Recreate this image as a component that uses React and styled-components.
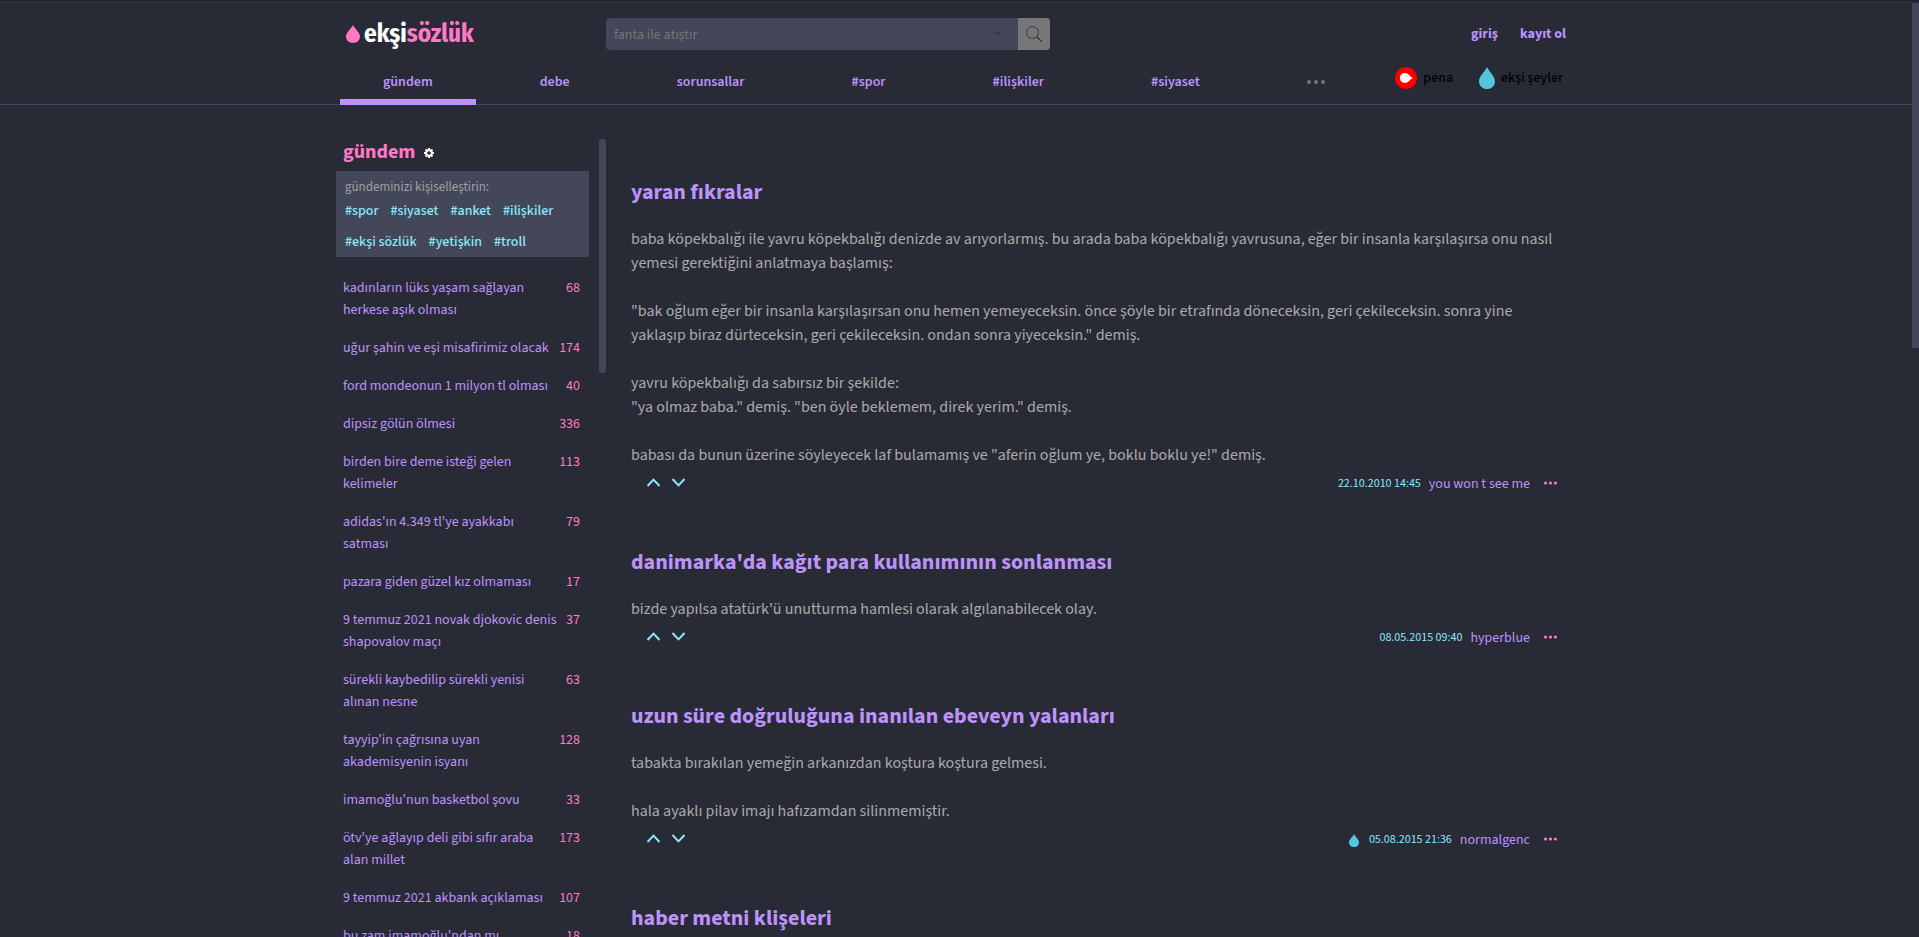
import React from "react"
import styled, { createGlobalStyle } from "styled-components"

const GlobalStyle = createGlobalStyle`
  * { box-sizing: border-box; }
  body {
    margin: 0;
    height: 100vh;
    overflow: hidden;
    background: #282a36;
    color: #aaa;
    font-family: "Source Sans Pro", "Source Sans 3", "Noto Sans", sans-serif;
    font-size: 14px;
    line-height: 22px;
  }
  a { color: #bd93f9; text-decoration: none; }
  button { border: 0; padding: 0; background: none; font: inherit; cursor: pointer; }
  svg { display: block; }
`

const Page = styled.div`
  height: 100vh;
  overflow: hidden;
  border-top: 1px solid #21222c;
  padding-right: 7px;
`

const PageScroll = styled.div`
  position: fixed;
  top: 3px;
  right: 0;
  width: 7px;
  height: 345px;
  background: #44475a;
`

const Header = styled.header`
  border-top: 1px solid #343642;
  border-bottom: 1px solid #44475a;
  margin-top: 1px;
`

const Container = styled.div`
  max-width: 1232px;
  margin: 0 auto;
`

const TopBar = styled.div`
  display: flex;
  align-items: center;
  padding: 15px 6px 0 6px;
  height: 47px;
`

const Logo = styled.a`
  display: flex;
  align-items: center;
  gap: 4px;
  width: 260px;
  color: #fff;
  font-size: 25px;
  font-weight: 700;
  line-height: 32px;
  font-family: "Fira Sans Condensed", "Open Sans Condensed", "Source Sans Pro", sans-serif;
  span span { color: #ff79c6; }
`

const Search = styled.form`
  display: flex;
  width: 444px;
  height: 32px;
  border-radius: 4px;
  overflow: hidden;
  background: #44475a;
  align-items: center;
  input {
    flex: 1;
    height: 32px;
    border: 0;
    outline: 0;
    padding: 1px 8px 0;
    background: none;
    color: #f8f8f2;
    font: inherit;
  }
  input::placeholder { color: #757575; opacity: 1; }
`

const CaretButton = styled.button`
  display: flex;
  padding: 12px 16px;
`

const SearchButton = styled.button`
  display: flex;
  align-items: center;
  justify-content: center;
  width: 32px;
  height: 32px;
  background: #777;
`

const Account = styled.nav`
  display: flex;
  gap: 22px;
  margin-left: auto;
  font-weight: 700;
`

const NavBar = styled.nav`
  display: flex;
  justify-content: space-between;
  height: 54px;
  padding: 0 9px 0 0;
`

const Tabs = styled.div`
  display: flex;
  gap: 21px;
`

const Tab = styled.a`
  padding: 21px 43px 0;
  font-weight: 600;
  border-bottom: 6px solid ${p => (p.$active ? "#bd93f9" : "transparent")};
  margin-bottom: -1px;
`

const MoreTab = styled.button`
  padding: 9px 43px 0;
`

const Sister = styled.div`
  display: flex;
  align-items: flex-start;
  gap: 26px;
  padding-top: 17px;
`

const SisterLink = styled.a`
  display: flex;
  align-items: center;
  gap: 6px;
  color: #000;
  font-weight: 500;
`

const Columns = styled.div`
  display: flex;
  align-items: flex-start;
  padding-top: 34px;
`

const Sidebar = styled.aside`
  flex: 0 0 249px;
  width: 249px;
  margin-right: 14px;
  margin-left: -4px;
`

const SideHead = styled.div`
  display: flex;
  align-items: flex-start;
  gap: 9px;
  padding-left: 7px;
  height: 32px;
  h2 {
    margin: 0;
    color: #ff79c6;
    font-size: 20px;
    line-height: 26px;
    font-weight: 700;
  }
  button { padding-top: 9px; }
`

const TagBox = styled.div`
  width: 253px;
  background: #44475a;
  padding: 5px 9px 0;
  height: 86px;
  small { display: block; font-size: 13px; line-height: 22px; color: #a0a0a0; }
`

const Tags = styled.div`
  display: flex;
  flex-wrap: wrap;
  column-gap: 12px;
  a { color: #8be9fd; font-weight: 500; line-height: 31px; }
  margin-top: -2px;
`

const Topics = styled.ul`
  list-style: none;
  margin: 12px 0 0;
  padding: 0;
`

const Topic = styled.li`
  a {
    display: flex;
    justify-content: space-between;
    padding: 8px 5px 8px 7px;
    white-space: pre-line;
  }
  small { font-size: 14px; color: #ff79c6; }
`

const SideScroll = styled.div`
  flex: 0 0 7px;
  height: 234px;
  border-radius: 3px;
  background: #44475a;
`

const Main = styled.main`
  flex: 1;
  padding: 41px 14px 0 25px;
`

const Entry = styled.article`
  margin-bottom: 55px;
  h1 {
    margin: 0 0 23px;
    font-size: 22px;
    line-height: 24px;
    font-weight: 700;
  }
  p {
    margin: 0;
    font-size: 16px;
    line-height: 24px;
    white-space: pre-line;
  }
`

const EntryFooter = styled.footer`
  display: flex;
  align-items: center;
  justify-content: space-between;
  padding: 6px 1px 0 16px;
`

const Votes = styled.div`
  display: flex;
  gap: 12px;
  padding-bottom: 3px;
`

const Meta = styled.div`
  display: flex;
  align-items: center;
  time { color: #8be9fd; font-size: 12px; margin: 0 8px 0 10px; }
  button { margin-left: 14px; padding-bottom: 2px; }
`

const Drop = ({ w, h, color }) => (
  <svg width={w} height={h} viewBox="0 0 14 18" preserveAspectRatio="none" aria-hidden="true">
    <path d="M7 0C5.6 3.2 0 7.6 0 11.6C0 15.4 3.1 18 7 18S14 15.4 14 11.6C14 7.6 8.4 3.2 7 0Z" fill={color} />
  </svg>
)

const Dots = ({ w, h, r, color }) => (
  <svg width={w} height={h} viewBox={`0 0 ${w} ${h}`} aria-hidden="true">
    <circle cx={r} cy={h / 2} r={r} fill={color} />
    <circle cx={w / 2} cy={h / 2} r={r} fill={color} />
    <circle cx={w - r} cy={h / 2} r={r} fill={color} />
  </svg>
)

const Chevron = ({ up }) => (
  <svg width="13" height="9" viewBox="0 0 13 9" fill="none" stroke="#8be9fd" strokeWidth="2" aria-hidden="true">
    <path d={up ? "M0.5 8L6.5 1.6L12.5 8" : "M0.5 1L6.5 7.4L12.5 1"} />
  </svg>
)

const tabs = ["gündem", "debe", "sorunsallar", "#spor", "#ilişkiler", "#siyaset"]

const tags = ["#spor", "#siyaset", "#anket", "#ilişkiler", "#ekşi sözlük", "#yetişkin", "#troll"]

const topics = [
  ["kadınların lüks yaşam sağlayan\nherkese aşık olması", 68],
  ["uğur şahin ve eşi misafirimiz olacak", 174],
  ["ford mondeonun 1 milyon tl olması", 40],
  ["dipsiz gölün ölmesi", 336],
  ["birden bire deme isteği gelen\nkelimeler", 113],
  ["adidas'ın 4.349 tl'ye ayakkabı\nsatması", 79],
  ["pazara giden güzel kız olmaması", 17],
  ["9 temmuz 2021 novak djokovic denis\nshapovalov maçı", 37],
  ["sürekli kaybedilip sürekli yenisi\nalınan nesne", 63],
  ["tayyip'in çağrısına uyan\nakademisyenin isyanı", 128],
  ["imamoğlu'nun basketbol şovu", 33],
  ["ötv'ye ağlayıp deli gibi sıfır araba\nalan millet", 173],
  ["9 temmuz 2021 akbank açıklaması", 107],
  ["bu zam imamoğlu'ndan mı", 18],
]

const entries = [
  {
    title: "yaran fıkralar",
    text: `baba köpekbalığı ile yavru köpekbalığı denizde av arıyorlarmış. bu arada baba köpekbalığı yavrusuna, eğer bir insanla karşılaşırsa onu nasıl yemesi gerektiğini anlatmaya başlamış:

"bak oğlum eğer bir insanla karşılaşırsan onu hemen yemeyeceksin. önce şöyle bir etrafında döneceksin, geri çekileceksin. sonra yine yaklaşıp biraz dürteceksin, geri çekileceksin. ondan sonra yiyeceksin." demiş.

yavru köpekbalığı da sabırsız bir şekilde:
"ya olmaz baba." demiş. "ben öyle beklemem, direk yerim." demiş.

babası da bunun üzerine söyleyecek laf bulamamış ve "aferin oğlum ye, boklu boklu ye!" demiş.`,
    date: "22.10.2010 14:45",
    author: "you won t see me",
  },
  {
    title: "danimarka'da kağıt para kullanımının sonlanması",
    text: "bizde yapılsa atatürk'ü unutturma hamlesi olarak algılanabilecek olay.",
    date: "08.05.2015 09:40",
    author: "hyperblue",
  },
  {
    title: "uzun süre doğruluğuna inanılan ebeveyn yalanları",
    text: `tabakta bırakılan yemeğin arkanızdan koştura koştura gelmesi.

hala ayaklı pilav imajı hafızamdan silinmemiştir.`,
    date: "05.08.2015 21:36",
    author: "normalgenc",
    drop: true,
  },
  { title: "haber metni klişeleri" },
]

const App = () => (
  <Page>
    <GlobalStyle />
    <Header>
      <Container>
        <TopBar>
          <Logo href="#">
            <Drop w={14} h={18} color="#ff79c6" />
            <span>ekşi<span>sözlük</span></span>
          </Logo>
          <Search onSubmit={e => e.preventDefault()}>
            <input type="text" aria-label="ara" placeholder="fanta ile atıştır" />
            <CaretButton type="button" aria-label="gelişmiş arama">
              <svg width="8" height="4" viewBox="0 0 8 4"><path d="M0 0H8L4 4Z" fill="#3a3a40" /></svg>
            </CaretButton>
            <SearchButton type="submit" aria-label="ara">
              <svg width="18" height="18" viewBox="0 0 18 18" fill="none" stroke="#33343f">
                <circle cx="7.5" cy="7.5" r="6" />
                <path d="M11.8 11.8L16.8 16.8" strokeWidth="1.3" />
              </svg>
            </SearchButton>
          </Search>
          <Account>
            <a href="#giris">giriş</a>
            <a href="#kayit">kayıt ol</a>
          </Account>
        </TopBar>
        <NavBar>
          <Tabs>
            {tabs.map((t, i) => <Tab key={t} href="#" $active={i === 0}>{t}</Tab>)}
            <MoreTab aria-label="diğer"><Dots w={18} h={4} r={2} color="#777" /></MoreTab>
          </Tabs>
          <Sister>
            <SisterLink href="#pena">
              <svg width="22" height="22" viewBox="0 0 22 22" aria-hidden="true">
                <circle cx="11" cy="11" r="11" fill="#f00" />
                <path d="M18 11C15.2 12.2 13.2 16 9.8 16A5 5 0 0 1 9.8 6C13.2 6 15.2 9.8 18 11Z" fill="#fff" />
              </svg>
              pena
            </SisterLink>
            <SisterLink href="#seyler">
              <Drop w={16} h={22} color="#53c5df" />
              ekşi şeyler
            </SisterLink>
          </Sister>
        </NavBar>
      </Container>
    </Header>

    <Container>
      <Columns>
        <Sidebar>
          <SideHead>
            <h2>gündem</h2>
            <button aria-label="ayarlar">
              <svg width="10" height="10" viewBox="0 0 10 10" aria-hidden="true">
                <circle cx="5" cy="5" r="2.8" fill="none" stroke="#f8f8f2" strokeWidth="2" />
                <path d="M5 0V2M5 8V10M0 5H2M8 5H10M1.5 1.5L2.8 2.8M7.2 7.2L8.5 8.5M1.5 8.5L2.8 7.2M7.2 2.8L8.5 1.5" stroke="#f8f8f2" strokeWidth="2" />
              </svg>
            </button>
          </SideHead>
          <TagBox>
            <small>gündeminizi kişiselleştirin:</small>
            <Tags>{tags.map(t => <a key={t} href="#">{t}</a>)}</Tags>
          </TagBox>
          <Topics>
            {topics.map(([title, count]) => (
              <Topic key={title}>
                <a href="#">{title}<small>{count}</small></a>
              </Topic>
            ))}
          </Topics>
        </Sidebar>
        <SideScroll />
        <Main>
          {entries.map(e => (
            <Entry key={e.title}>
              <h1><a href="#">{e.title}</a></h1>
              {e.text && <p>{e.text}</p>}
              {e.text && (
                <EntryFooter>
                  <Votes>
                    <button aria-label="şükela"><Chevron up /></button>
                    <button aria-label="çok kötü"><Chevron /></button>
                  </Votes>
                  <Meta>
                    {e.drop && <Drop w={10} h={13} color="#53c5df" />}
                    <time>{e.date}</time>
                    <a href="#">{e.author}</a>
                    <button aria-label="diğer"><Dots w={13} h={4} r={1.6} color="#ff79c6" /></button>
                  </Meta>
                </EntryFooter>
              )}
            </Entry>
          ))}
        </Main>
      </Columns>
    </Container>
    <PageScroll />
  </Page>
)

export default App
